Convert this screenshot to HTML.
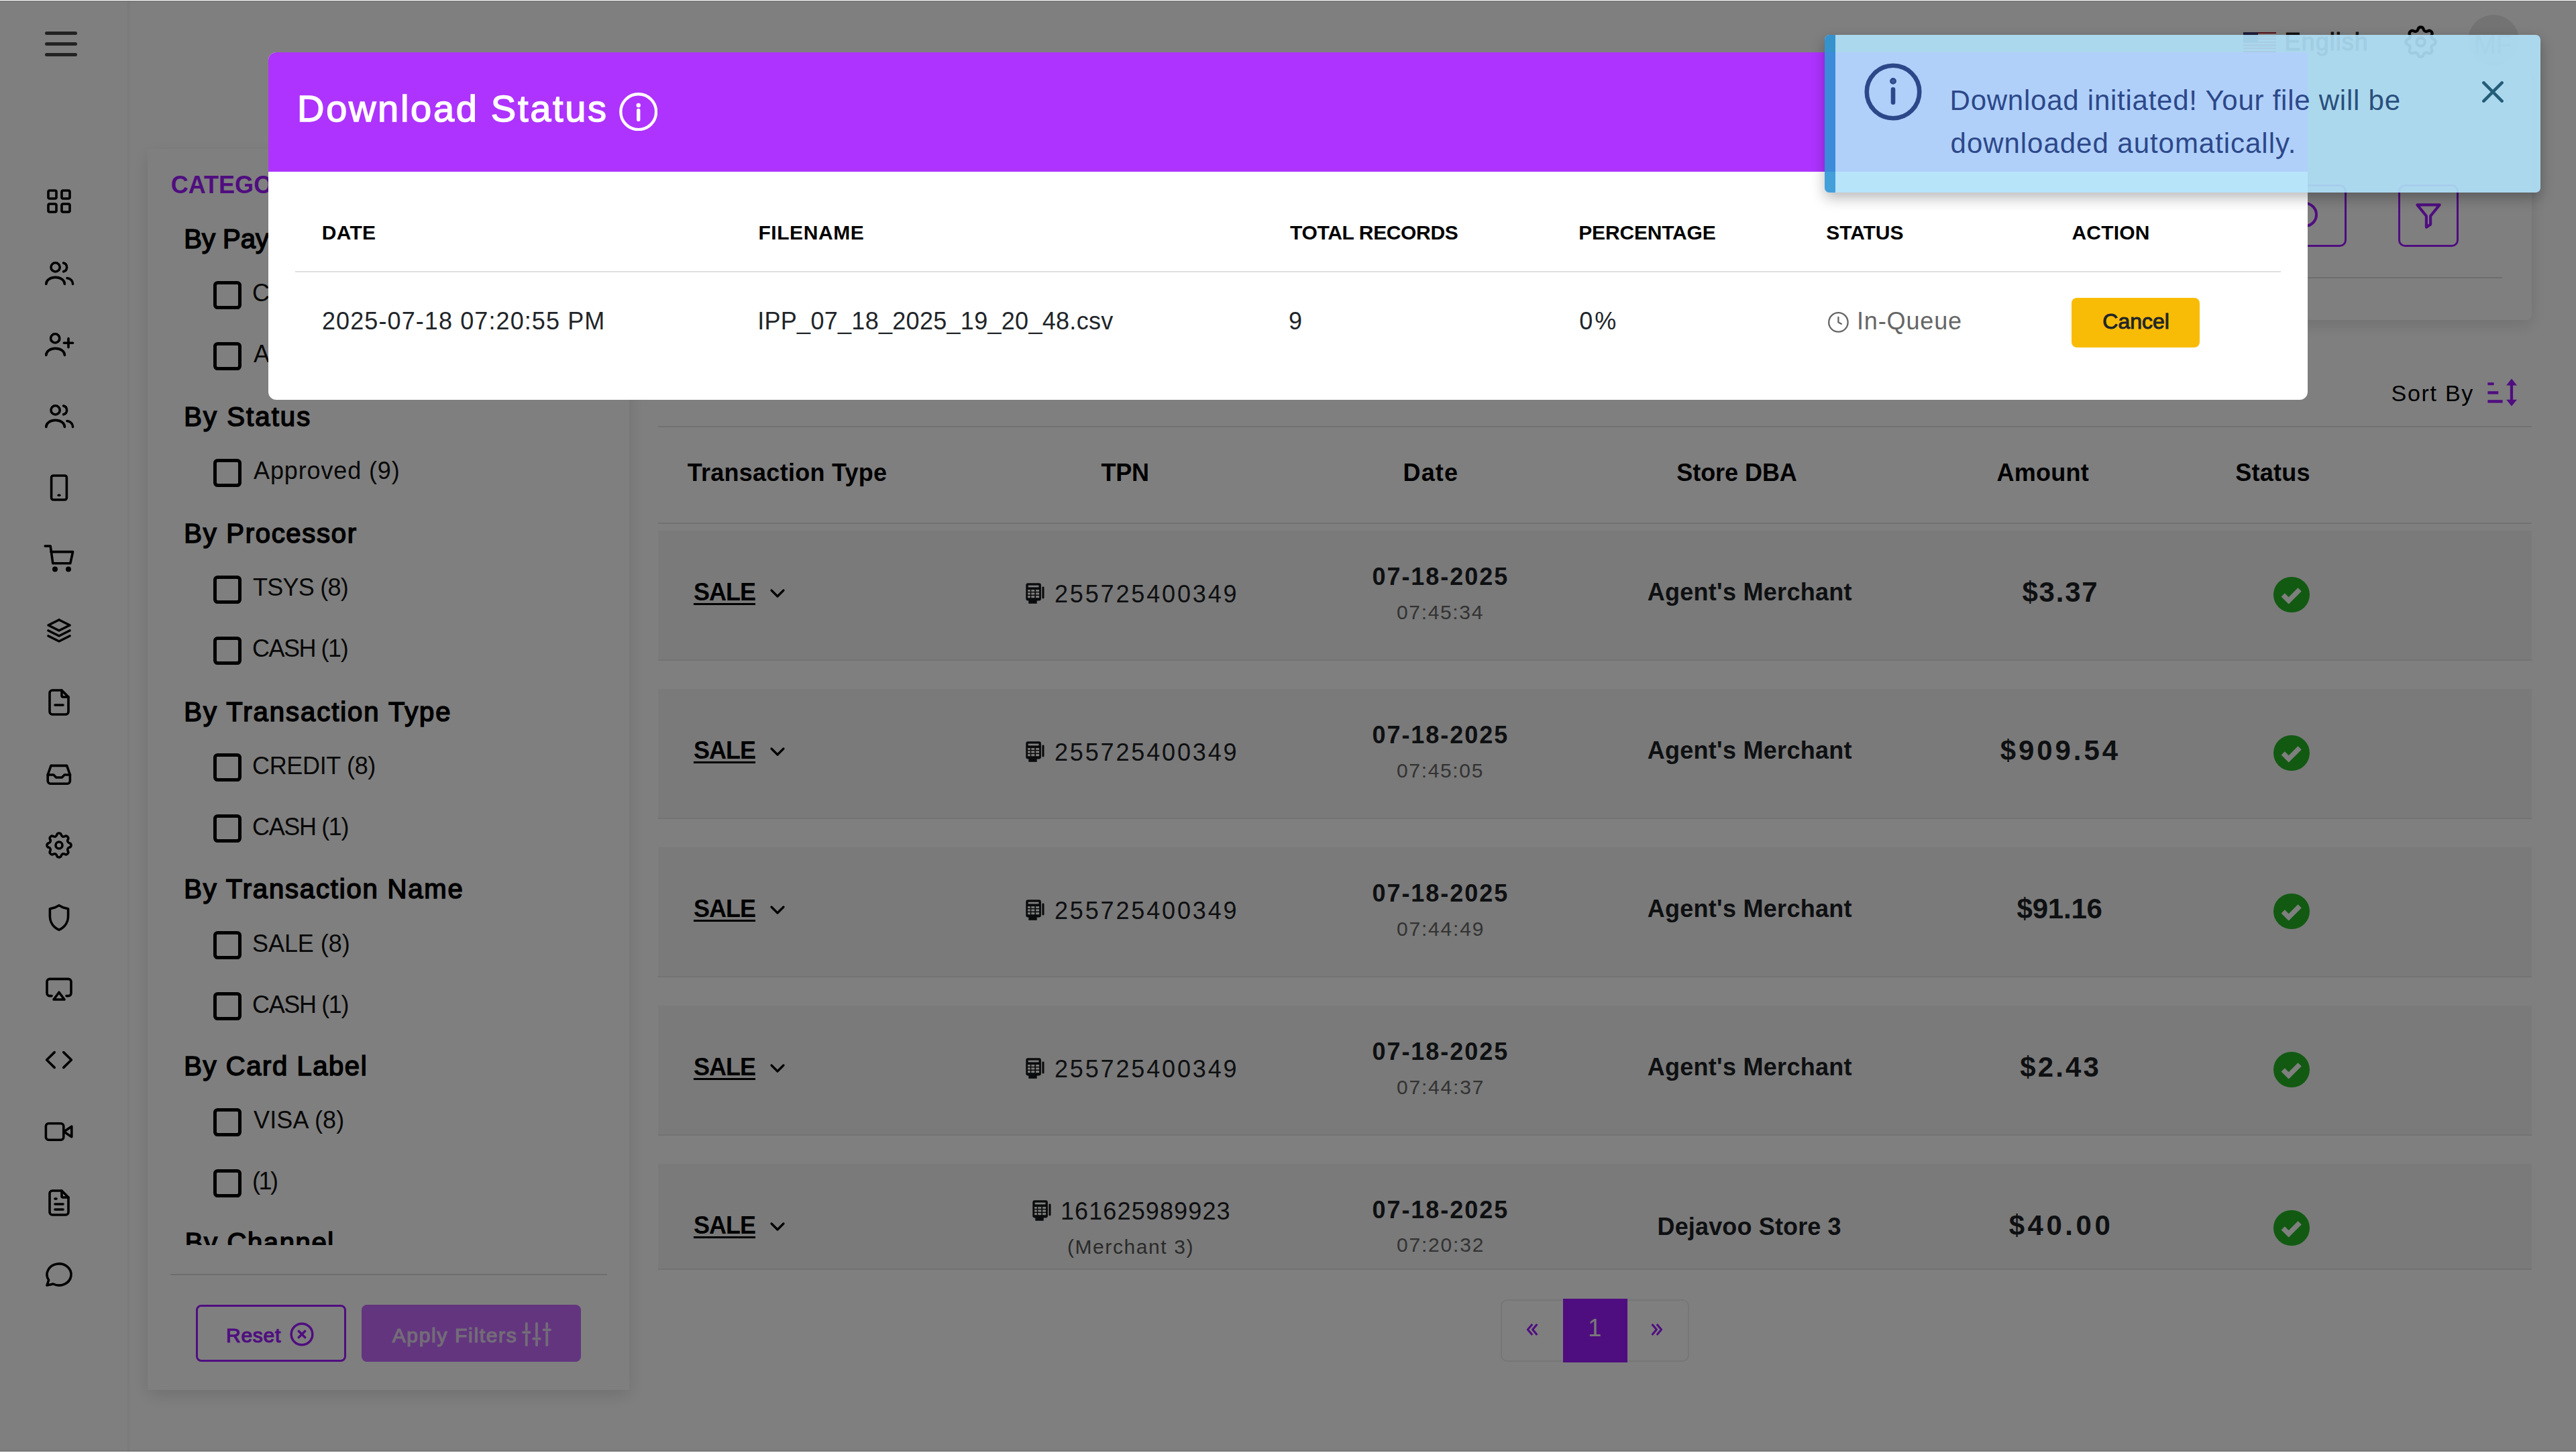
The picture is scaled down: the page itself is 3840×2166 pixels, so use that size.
<!DOCTYPE html>
<html>
<head>
<meta charset="utf-8">
<title>Download Status</title>
<style>
html{zoom:2;}
html,body{margin:0;padding:0;}
body{width:1920px;height:1083px;overflow:hidden;position:relative;background:#fff;font-family:"Liberation Sans",sans-serif;color:#212529;}
.abs{position:absolute;}
.t{position:absolute;white-space:nowrap;line-height:1;}
.cb{position:absolute;width:16px;height:16px;border:2.6px solid #000;border-radius:3.2px;box-sizing:content-box;}
</style>
</head>
<body>
<div class="abs" style="left:0;top:0;width:1920px;height:1083px;background:#fff;"><div class="abs" style="left:0;top:0;width:95px;height:1083px;background:#fff;box-shadow:1px 0 3px rgba(0,0,0,.06);"></div><div class="abs" style="left:33.5px;top:23.25px;width:24px;height:2.5px;border-radius:2px;background:#444;"></div><div class="abs" style="left:33.5px;top:31.25px;width:24px;height:2.5px;border-radius:2px;background:#444;"></div><div class="abs" style="left:33.5px;top:39.25px;width:24px;height:2.5px;border-radius:2px;background:#444;"></div><svg class="abs" style="left:32px;top:138px;width:24px;height:24px;" viewBox="0 0 24 24" fill="none" stroke="#000" stroke-width="1.8" stroke-linecap="round" stroke-linejoin="round"><rect x="4" y="4" width="6" height="6" rx="1"/><rect x="14" y="4" width="6" height="6" rx="1"/><rect x="4" y="14" width="6" height="6" rx="1"/><rect x="14" y="14" width="6" height="6" rx="1"/></svg><svg class="abs" style="left:32px;top:191.4px;width:24px;height:24px;" viewBox="0 0 24 24" fill="none" stroke="#000" stroke-width="1.8" stroke-linecap="round" stroke-linejoin="round"><circle cx="9.3" cy="7.7" r="3.3"/><path d="M2.4 20.2a6.9 5 0 0 1 13.8 0"/><path d="M15.3 4.5a3.3 3.3 0 0 1 0 6.4"/><path d="M18 15.8a4.5 4.5 0 0 1 4.3 4.4"/></svg><svg class="abs" style="left:32px;top:244.5px;width:24px;height:24px;" viewBox="0 0 24 24" fill="none" stroke="#000" stroke-width="1.8" stroke-linecap="round" stroke-linejoin="round"><circle cx="9.1" cy="7.7" r="3.3"/><path d="M2.4 20.2a6.9 5 0 0 1 13.8 0"/><path d="M15.7 11.1h6.6M19 7.8v6.6"/></svg><svg class="abs" style="left:32px;top:298px;width:24px;height:24px;" viewBox="0 0 24 24" fill="none" stroke="#000" stroke-width="1.8" stroke-linecap="round" stroke-linejoin="round"><circle cx="9.3" cy="7.7" r="3.3"/><path d="M2.4 20.2a6.9 5 0 0 1 13.8 0"/><path d="M15.3 4.5a3.3 3.3 0 0 1 0 6.4"/><path d="M18 15.8a4.5 4.5 0 0 1 4.3 4.4"/></svg><svg class="abs" style="left:32px;top:351.4px;width:24px;height:24px;" viewBox="0 0 24 24" fill="none" stroke="#000" stroke-width="1.8" stroke-linecap="round" stroke-linejoin="round"><rect x="6.3" y="3" width="11.4" height="18" rx="1.5"/><path d="M11.6 17.6h.8"/></svg><svg class="abs" style="left:32px;top:404px;width:24px;height:24px;" viewBox="0 0 24 24" fill="none" stroke="#000" stroke-width="1.8" stroke-linecap="round" stroke-linejoin="round"><circle cx="9" cy="20.3" r="1.1" fill="#000"/><circle cx="19" cy="20.3" r="1.1" fill="#000"/><path d="M1.6 3h4l1.8 12.9h13l1.9 -8.6h-16.4"/></svg><svg class="abs" style="left:32px;top:458px;width:24px;height:24px;" viewBox="0 0 24 24" fill="none" stroke="#000" stroke-width="1.8" stroke-linecap="round" stroke-linejoin="round"><path d="M12 4l-8 4l8 4l8 -4l-8 -4"/><path d="M4 12l8 4l8 -4"/><path d="M4 16l8 4l8 -4"/></svg><svg class="abs" style="left:32px;top:511.4px;width:24px;height:24px;" viewBox="0 0 24 24" fill="none" stroke="#000" stroke-width="1.8" stroke-linecap="round" stroke-linejoin="round"><path d="M14 3v4a1 1 0 0 0 1 1h4"/><path d="M17 21h-10a2 2 0 0 1 -2 -2v-14a2 2 0 0 1 2 -2h7l5 5v11a2 2 0 0 1 -2 2z"/><path d="M9 14l6 0"/></svg><svg class="abs" style="left:32px;top:564.3px;width:24px;height:24px;" viewBox="0 0 24 24" fill="none" stroke="#000" stroke-width="1.8" stroke-linecap="round" stroke-linejoin="round"><path d="M3.6 13l2.4 -6.8h11.8l2.4 6.8v4.6a2 2 0 0 1 -2 2h-12.6a2 2 0 0 1 -2 -2z"/><path d="M3.6 13h4.3l2 2h4.2l2 -2h4.2"/></svg><svg class="abs" style="left:32px;top:618px;width:24px;height:24px;" viewBox="0 0 24 24" fill="none" stroke="#000" stroke-width="1.8" stroke-linecap="round" stroke-linejoin="round"><path d="M10.325 4.317c.426 -1.756 2.924 -1.756 3.35 0a1.724 1.724 0 0 0 2.573 1.066c1.543 -.94 3.31 .826 2.37 2.37a1.724 1.724 0 0 0 1.065 2.572c1.756 .426 1.756 2.924 0 3.35a1.724 1.724 0 0 0 -1.066 2.573c.94 1.543 -.826 3.31 -2.37 2.37a1.724 1.724 0 0 0 -2.572 1.065c-.426 1.756 -2.924 1.756 -3.35 0a1.724 1.724 0 0 0 -2.573 -1.066c-1.543 .94 -3.31 -.826 -2.37 -2.37a1.724 1.724 0 0 0 -1.065 -2.572c-1.756 -.426 -1.756 -2.924 0 -3.35a1.724 1.724 0 0 0 1.066 -2.573c-.94 -1.543 .826 -3.31 2.37 -2.37c1 .608 2.296 .07 2.572 -1.065z"/><circle cx="12" cy="12" r="2.5"/></svg><svg class="abs" style="left:32px;top:671.5px;width:24px;height:24px;" viewBox="0 0 24 24" fill="none" stroke="#000" stroke-width="1.8" stroke-linecap="round" stroke-linejoin="round"><path d="M12 3.3c-2 1.4 -4.4 2.2 -6.8 2.6v5.4c0 5 3 8.6 6.8 10.3c3.8 -1.7 6.8 -5.3 6.8 -10.3v-5.4c-2.4 -.4 -4.8 -1.2 -6.8 -2.6z"/></svg><svg class="abs" style="left:32px;top:724.8px;width:24px;height:24px;" viewBox="0 0 24 24" fill="none" stroke="#000" stroke-width="1.8" stroke-linecap="round" stroke-linejoin="round"><path d="M6.5 17.3h-1.5a2 2 0 0 1 -2 -2v-8.6a2 2 0 0 1 2 -2h14a2 2 0 0 1 2 2v8.6a2 2 0 0 1 -2 2h-1.5"/><path d="M12 14.6l4 5.4h-8z"/></svg><svg class="abs" style="left:32px;top:778px;width:24px;height:24px;" viewBox="0 0 24 24" fill="none" stroke="#000" stroke-width="1.8" stroke-linecap="round" stroke-linejoin="round"><path d="M8.6 6.3l-5.8 5.7l5.8 5.7"/><path d="M15.4 6.3l5.8 5.7l-5.8 5.7"/></svg><svg class="abs" style="left:32px;top:831.4px;width:24px;height:24px;" viewBox="0 0 24 24" fill="none" stroke="#000" stroke-width="1.8" stroke-linecap="round" stroke-linejoin="round"><rect x="2.2" y="5.9" width="13.2" height="12.2" rx="2"/><path d="M15.6 12l5.8 -3.9v7.8z"/></svg><svg class="abs" style="left:32px;top:884.7px;width:24px;height:24px;" viewBox="0 0 24 24" fill="none" stroke="#000" stroke-width="1.8" stroke-linecap="round" stroke-linejoin="round"><path d="M14 3v4a1 1 0 0 0 1 1h4"/><path d="M17 21h-10a2 2 0 0 1 -2 -2v-14a2 2 0 0 1 2 -2h7l5 5v11a2 2 0 0 1 -2 2z"/><path d="M9 9l1 0"/><path d="M9 13l6 0"/><path d="M9 17l6 0"/></svg><svg class="abs" style="left:32px;top:938px;width:24px;height:24px;" viewBox="0 0 24 24" fill="none" stroke="#000" stroke-width="1.8" stroke-linecap="round" stroke-linejoin="round"><path d="M3 20l1.3 -3.9a9 8 0 1 1 3.4 2.9l-4.7 1"/></svg><div class="abs" style="left:1672px;top:24px;width:24.5px;height:15px;background:repeating-linear-gradient(#b22234 0 1.15px,#fff 1.15px 2.3px);"><div class="abs" style="left:0;top:0;width:11px;height:8px;background:#3c3b6e;"></div></div><div class="t" style="left:1702.80px;top:22.26px;font-size:18px;font-weight:400;color:#222;letter-spacing:0.500px;-webkit-text-stroke:0.6px #222;">English</div><svg class="abs" style="left:1789.6px;top:16.7px;width:29.6px;height:29.6px;" viewBox="0 0 24 24" fill="none" stroke="#000" stroke-width="1.7" stroke-linecap="round" stroke-linejoin="round"><path d="M10.325 4.317c.426 -1.756 2.924 -1.756 3.35 0a1.724 1.724 0 0 0 2.573 1.066c1.543 -.94 3.31 .826 2.37 2.37a1.724 1.724 0 0 0 1.065 2.572c1.756 .426 1.756 2.924 0 3.35a1.724 1.724 0 0 0 -1.066 2.573c.94 1.543 -.826 3.31 -2.37 2.37a1.724 1.724 0 0 0 -2.572 1.065c-.426 1.756 -2.924 1.756 -3.35 0a1.724 1.724 0 0 0 -2.573 -1.066c-1.543 .94 -3.31 -.826 -2.37 -2.37a1.724 1.724 0 0 0 -1.065 -2.572c-1.756 -.426 -1.756 -2.924 0 -3.35a1.724 1.724 0 0 0 1.066 -2.573c-.94 -1.543 .826 -3.31 2.37 -2.37c1 .608 2.296 .07 2.572 -1.065z"/><circle cx="12" cy="12" r="2.5"/></svg><div class="abs" style="left:1839.5px;top:11px;width:38px;height:38px;border-radius:50%;background:#e6e6e6;"></div><div class="t" style="left:1844.00px;top:23.07px;font-size:20px;font-weight:400;color:#999;letter-spacing:-0.500px;">MF</div><div class="abs" style="left:110px;top:111px;width:359px;height:925px;background:#fff;border-radius:0;box-shadow:0 4px 12px rgba(0,0,0,.12);"></div><div class="t" style="left:127.40px;top:129.16px;font-size:18px;font-weight:700;color:#9e1cff;">CATEGORIES</div><div class="t" style="left:137.15px;top:168.07px;font-size:20px;font-weight:400;color:#000;-webkit-text-stroke:0.8px #000;">By Payment Type</div><div class="cb" style="left:158.8px;top:209.35px;"></div><div class="t" style="left:188.00px;top:209.71px;font-size:18px;font-weight:400;color:#111;">CARD (8)</div><div class="cb" style="left:158.8px;top:254.85px;"></div><div class="t" style="left:189.00px;top:255.21px;font-size:18px;font-weight:400;color:#111;">ACH (1)</div><div class="t" style="left:137.15px;top:300.52px;font-size:20px;font-weight:400;color:#000;letter-spacing:1.044px;-webkit-text-stroke:0.8px #000;">By Status</div><div class="cb" style="left:158.8px;top:341.80px;"></div><div class="t" style="left:189.00px;top:342.16px;font-size:18px;font-weight:400;color:#111;letter-spacing:0.436px;">Approved (9)</div><div class="t" style="left:137.15px;top:387.57px;font-size:20px;font-weight:400;color:#000;letter-spacing:0.859px;-webkit-text-stroke:0.8px #000;">By Processor</div><div class="cb" style="left:158.8px;top:428.85px;"></div><div class="t" style="left:188.50px;top:429.21px;font-size:18px;font-weight:400;color:#111;letter-spacing:-0.386px;">TSYS (8)</div><div class="cb" style="left:158.8px;top:474.35px;"></div><div class="t" style="left:188.00px;top:474.71px;font-size:18px;font-weight:400;color:#111;letter-spacing:-0.743px;">CASH (1)</div><div class="t" style="left:137.15px;top:520.42px;font-size:20px;font-weight:400;color:#000;letter-spacing:0.989px;-webkit-text-stroke:0.8px #000;">By Transaction Type</div><div class="cb" style="left:158.8px;top:561.70px;"></div><div class="t" style="left:188.00px;top:562.06px;font-size:18px;font-weight:400;color:#111;letter-spacing:-0.167px;">CREDIT (8)</div><div class="cb" style="left:158.8px;top:607.20px;"></div><div class="t" style="left:188.00px;top:607.56px;font-size:18px;font-weight:400;color:#111;letter-spacing:-0.686px;">CASH (1)</div><div class="t" style="left:137.15px;top:652.67px;font-size:20px;font-weight:400;color:#000;letter-spacing:0.917px;-webkit-text-stroke:0.8px #000;">By Transaction Name</div><div class="cb" style="left:158.8px;top:693.95px;"></div><div class="t" style="left:188.00px;top:694.31px;font-size:18px;font-weight:400;color:#111;letter-spacing:-0.029px;">SALE (8)</div><div class="cb" style="left:158.8px;top:739.45px;"></div><div class="t" style="left:188.00px;top:739.81px;font-size:18px;font-weight:400;color:#111;letter-spacing:-0.686px;">CASH (1)</div><div class="t" style="left:137.15px;top:784.47px;font-size:20px;font-weight:400;color:#000;letter-spacing:0.783px;-webkit-text-stroke:0.8px #000;">By Card Label</div><div class="cb" style="left:158.8px;top:825.75px;"></div><div class="t" style="left:189.00px;top:826.11px;font-size:18px;font-weight:400;color:#111;letter-spacing:0.086px;">VISA (8)</div><div class="cb" style="left:158.8px;top:871.25px;"></div><div class="t" style="left:188.00px;top:871.61px;font-size:18px;font-weight:400;color:#111;letter-spacing:-1.250px;">(1)</div><div class="abs" style="left:120px;top:900px;width:340px;height:27.95px;overflow:hidden;"><div class="t" style="left:17.85px;top:15.82px;font-size:20px;font-weight:400;color:#000;letter-spacing:0.817px;-webkit-text-stroke:0.8px #000;">By Channel</div></div><div class="abs" style="left:127px;top:949.5px;width:325.5px;height:1px;background:#dcdcdc;"></div><div class="abs" style="left:146px;top:972.4px;width:112px;height:42.8px;box-sizing:border-box;border:1.5px solid #9e1cff;border-radius:4px;"></div><div class="t" style="left:168.50px;top:987.80px;font-size:15px;font-weight:400;color:#9e1cff;letter-spacing:0.375px;-webkit-text-stroke:0.6px #9e1cff;">Reset</div><svg class="abs" style="left:215.7px;top:984.8px;width:19px;height:19px;" viewBox="0 0 24 24" fill="none" stroke="#9e1cff" stroke-width="2.2" stroke-linecap="round" stroke-linejoin="round"><circle cx="12" cy="12" r="10"/><path d="M9 9l6 6m0 -6l-6 6"/></svg><div class="abs" style="left:269.5px;top:972.4px;width:163.6px;height:42.8px;background:#c66aff;border-radius:4px;"></div><div class="t" style="left:292.35px;top:987.80px;font-size:15px;font-weight:400;color:#e6d8f0;letter-spacing:0.833px;-webkit-text-stroke:0.6px #e6d8f0;">Apply Filters</div><svg class="abs" style="left:388.5px;top:984.5px;width:23px;height:20px;" viewBox="0 0 24 21" fill="none" stroke="#e6d8f0" stroke-width="2" stroke-linecap="round" stroke-linejoin="round"><path d="M4 2v5m0 4v8M12 2v10m0 4v3M20 2v3m0 4v10M1.5 9h5M9.5 14h5M17.5 7h5"/></svg><div class="abs" style="left:480px;top:50px;width:1407px;height:188.5px;background:#fff;border-radius:4px;box-shadow:0 4px 12px rgba(0,0,0,.12);"></div><div class="abs" style="left:500px;top:206.5px;width:1365px;height:1px;background:#dcdcdc;"></div><div class="abs" style="left:1704px;top:137.4px;width:45px;height:46.6px;box-sizing:border-box;border:1.5px solid #9e1cff;border-radius:5px;"></div><svg class="abs" style="left:1706px;top:148px;width:24px;height:24px;" viewBox="0 0 24 24" fill="none" stroke="#9e1cff" stroke-width="2" stroke-linecap="round" stroke-linejoin="round"><circle cx="12" cy="12" r="8.5"/></svg><div class="abs" style="left:1787.5px;top:137.4px;width:45px;height:46.6px;box-sizing:border-box;border:1.5px solid #9e1cff;border-radius:5px;"></div><svg class="abs" style="left:1797.5px;top:148.5px;width:25px;height:25px;" viewBox="0 0 24 24" fill="none" stroke="#9e1cff" stroke-width="2" stroke-linecap="round" stroke-linejoin="round"><path d="M4 4h16l-6.5 8v6l-3 2v-8z"/></svg><div class="t" style="left:1782.30px;top:284.61px;font-size:17px;font-weight:400;color:#000;letter-spacing:0.850px;">Sort By</div><svg class="abs" style="left:1853px;top:282px;width:24px;height:22px;" viewBox="0 0 24 22" fill="#9e1cff" stroke="none" stroke-width="2" stroke-linecap="round" stroke-linejoin="round"><rect x="1.2" y="3.1" width="4.6" height="2"/><rect x="1.2" y="9.6" width="7.95" height="2.2"/><rect x="1.2" y="16.1" width="11.1" height="2.2"/><rect x="17.9" y="4" width="2.15" height="13"/><polygon points="15.05,5.3 23,5.3 19,0.3"/><polygon points="15.05,15.9 23,15.9 19,20.7"/></svg><div class="abs" style="left:490.6px;top:317.5px;width:1396.4px;height:1px;background:#e2e2e2;"></div><div class="abs" style="left:490.6px;top:389.5px;width:1396.4px;height:1px;background:#e2e2e2;"></div><div class="t" style="left:512.35px;top:343.61px;font-size:18px;font-weight:700;color:#000;letter-spacing:0.133px;">Transaction Type</div><div class="t" style="left:820.70px;top:343.61px;font-size:18px;font-weight:700;color:#000;letter-spacing:-0.100px;">TPN</div><div class="t" style="left:1045.80px;top:343.61px;font-size:18px;font-weight:700;color:#000;letter-spacing:0.550px;">Date</div><div class="t" style="left:1249.65px;top:343.61px;font-size:18px;font-weight:700;color:#000;letter-spacing:-0.031px;">Store DBA</div><div class="t" style="left:1488.30px;top:343.61px;font-size:18px;font-weight:700;color:#000;letter-spacing:0.120px;">Amount</div><div class="t" style="left:1666.15px;top:343.61px;font-size:18px;font-weight:700;color:#000;letter-spacing:0.130px;">Status</div><div class="abs" style="left:490.6px;top:395.6px;width:1396.4px;height:97.1px;background:#f4f4f4;border-bottom:1px solid #e6e6e6;box-sizing:border-box;"></div><div class="t" style="left:516.95px;top:432.66px;font-size:18px;font-weight:700;color:#000;letter-spacing:-0.483px;text-decoration:underline;text-underline-offset:2px;text-decoration-thickness:1.5px;">SALE</div><svg class="abs" style="left:573.5px;top:438.4px;width:12px;height:8px;" viewBox="0 0 12 8" fill="none" stroke="#000" stroke-width="1.6" stroke-linecap="round" stroke-linejoin="round"><path d="M1.5 1.5l4.5 4.5l4.5 -4.5"/></svg><svg class="abs" style="left:764px;top:432.9px;width:15px;height:17px;" viewBox="0 0 15 17" fill="none" stroke="none" stroke-width="2" stroke-linecap="round" stroke-linejoin="round"><rect x="0.65" y="1.6" width="11.3" height="13.15" rx="1.6" fill="#151719" stroke="none"/><g fill="#fff" stroke="none"><rect x="2.35" y="3.3" width="7.9" height="1.4"/><rect x="2.05" y="6.55" width="1.85" height="1.4"/><rect x="4.65" y="6.55" width="2.5" height="1.4"/><rect x="8.05" y="6.55" width="2.5" height="1.4"/><rect x="2.05" y="8.7" width="1.85" height="1.55"/><rect x="4.65" y="8.7" width="2.5" height="1.55"/><rect x="8.05" y="8.7" width="2.5" height="1.55"/><rect x="2.05" y="11.05" width="1.85" height="1.55"/><rect x="4.65" y="11.05" width="2.5" height="1.55"/><rect x="8.05" y="11.05" width="2.5" height="1.55"/></g><rect x="2.65" y="14" width="6.2" height="2.9" fill="#151719" stroke="none"/><rect x="12.7" y="4.2" width="1.55" height="9" rx=".7" fill="#151719" stroke="none"/></svg><div class="t" style="left:786.00px;top:434.06px;font-size:18px;font-weight:400;color:#1d2024;letter-spacing:1.423px;">255725400349</div><div class="t" style="left:1022.70px;top:420.91px;font-size:18px;font-weight:700;color:#1d2024;letter-spacing:0.989px;">07-18-2025</div><div class="t" style="left:1041.00px;top:448.85px;font-size:15px;font-weight:400;color:#666;letter-spacing:0.829px;">07:45:34</div><div class="t" style="left:1227.83px;top:432.66px;font-size:18px;font-weight:700;color:#1d2024;letter-spacing:0.143px;">Agent's Merchant</div><div class="t" style="left:1507.25px;top:431.02px;font-size:21px;font-weight:700;color:#1d2024;letter-spacing:0.875px;">$3.37</div><div class="abs" style="left:1694.65px;top:430.04999999999995px;width:26.7px;height:26.7px;border-radius:50%;background:#24b424;"></div><svg class="abs" style="left:1694.65px;top:430.04999999999995px;width:26.7px;height:26.7px;stroke-linecap:butt;stroke-linejoin:miter;" viewBox="0 0 24 24" fill="none" stroke="#fff" stroke-width="3.3" stroke-linecap="round" stroke-linejoin="round"><path d="M6.4 12.1l3.8 3.8l7.4 -7.4"/></svg><div class="abs" style="left:490.6px;top:513.6px;width:1396.4px;height:97.1px;background:#f4f4f4;border-bottom:1px solid #e6e6e6;box-sizing:border-box;"></div><div class="t" style="left:516.95px;top:550.61px;font-size:18px;font-weight:700;color:#000;letter-spacing:-0.483px;text-decoration:underline;text-underline-offset:2px;text-decoration-thickness:1.5px;">SALE</div><svg class="abs" style="left:573.5px;top:556.35px;width:12px;height:8px;" viewBox="0 0 12 8" fill="none" stroke="#000" stroke-width="1.6" stroke-linecap="round" stroke-linejoin="round"><path d="M1.5 1.5l4.5 4.5l4.5 -4.5"/></svg><svg class="abs" style="left:764px;top:550.85px;width:15px;height:17px;" viewBox="0 0 15 17" fill="none" stroke="none" stroke-width="2" stroke-linecap="round" stroke-linejoin="round"><rect x="0.65" y="1.6" width="11.3" height="13.15" rx="1.6" fill="#151719" stroke="none"/><g fill="#fff" stroke="none"><rect x="2.35" y="3.3" width="7.9" height="1.4"/><rect x="2.05" y="6.55" width="1.85" height="1.4"/><rect x="4.65" y="6.55" width="2.5" height="1.4"/><rect x="8.05" y="6.55" width="2.5" height="1.4"/><rect x="2.05" y="8.7" width="1.85" height="1.55"/><rect x="4.65" y="8.7" width="2.5" height="1.55"/><rect x="8.05" y="8.7" width="2.5" height="1.55"/><rect x="2.05" y="11.05" width="1.85" height="1.55"/><rect x="4.65" y="11.05" width="2.5" height="1.55"/><rect x="8.05" y="11.05" width="2.5" height="1.55"/></g><rect x="2.65" y="14" width="6.2" height="2.9" fill="#151719" stroke="none"/><rect x="12.7" y="4.2" width="1.55" height="9" rx=".7" fill="#151719" stroke="none"/></svg><div class="t" style="left:786.00px;top:552.01px;font-size:18px;font-weight:400;color:#1d2024;letter-spacing:1.423px;">255725400349</div><div class="t" style="left:1022.70px;top:538.86px;font-size:18px;font-weight:700;color:#1d2024;letter-spacing:0.989px;">07-18-2025</div><div class="t" style="left:1041.00px;top:566.80px;font-size:15px;font-weight:400;color:#666;letter-spacing:0.829px;">07:45:05</div><div class="t" style="left:1227.83px;top:550.61px;font-size:18px;font-weight:700;color:#1d2024;letter-spacing:0.143px;">Agent's Merchant</div><div class="t" style="left:1490.85px;top:548.97px;font-size:21px;font-weight:700;color:#1d2024;letter-spacing:1.967px;">$909.54</div><div class="abs" style="left:1694.65px;top:548.0px;width:26.7px;height:26.7px;border-radius:50%;background:#24b424;"></div><svg class="abs" style="left:1694.65px;top:548.0px;width:26.7px;height:26.7px;stroke-linecap:butt;stroke-linejoin:miter;" viewBox="0 0 24 24" fill="none" stroke="#fff" stroke-width="3.3" stroke-linecap="round" stroke-linejoin="round"><path d="M6.4 12.1l3.8 3.8l7.4 -7.4"/></svg><div class="abs" style="left:490.6px;top:631.6px;width:1396.4px;height:97.1px;background:#f4f4f4;border-bottom:1px solid #e6e6e6;box-sizing:border-box;"></div><div class="t" style="left:516.95px;top:668.56px;font-size:18px;font-weight:700;color:#000;letter-spacing:-0.483px;text-decoration:underline;text-underline-offset:2px;text-decoration-thickness:1.5px;">SALE</div><svg class="abs" style="left:573.5px;top:674.3px;width:12px;height:8px;" viewBox="0 0 12 8" fill="none" stroke="#000" stroke-width="1.6" stroke-linecap="round" stroke-linejoin="round"><path d="M1.5 1.5l4.5 4.5l4.5 -4.5"/></svg><svg class="abs" style="left:764px;top:668.8px;width:15px;height:17px;" viewBox="0 0 15 17" fill="none" stroke="none" stroke-width="2" stroke-linecap="round" stroke-linejoin="round"><rect x="0.65" y="1.6" width="11.3" height="13.15" rx="1.6" fill="#151719" stroke="none"/><g fill="#fff" stroke="none"><rect x="2.35" y="3.3" width="7.9" height="1.4"/><rect x="2.05" y="6.55" width="1.85" height="1.4"/><rect x="4.65" y="6.55" width="2.5" height="1.4"/><rect x="8.05" y="6.55" width="2.5" height="1.4"/><rect x="2.05" y="8.7" width="1.85" height="1.55"/><rect x="4.65" y="8.7" width="2.5" height="1.55"/><rect x="8.05" y="8.7" width="2.5" height="1.55"/><rect x="2.05" y="11.05" width="1.85" height="1.55"/><rect x="4.65" y="11.05" width="2.5" height="1.55"/><rect x="8.05" y="11.05" width="2.5" height="1.55"/></g><rect x="2.65" y="14" width="6.2" height="2.9" fill="#151719" stroke="none"/><rect x="12.7" y="4.2" width="1.55" height="9" rx=".7" fill="#151719" stroke="none"/></svg><div class="t" style="left:786.00px;top:669.96px;font-size:18px;font-weight:400;color:#1d2024;letter-spacing:1.423px;">255725400349</div><div class="t" style="left:1022.70px;top:656.81px;font-size:18px;font-weight:700;color:#1d2024;letter-spacing:0.989px;">07-18-2025</div><div class="t" style="left:1041.00px;top:684.75px;font-size:15px;font-weight:400;color:#666;letter-spacing:0.900px;">07:44:49</div><div class="t" style="left:1227.83px;top:668.56px;font-size:18px;font-weight:700;color:#1d2024;letter-spacing:0.143px;">Agent's Merchant</div><div class="t" style="left:1503.30px;top:666.92px;font-size:21px;font-weight:700;color:#1d2024;letter-spacing:-0.120px;">$91.16</div><div class="abs" style="left:1694.65px;top:665.9499999999999px;width:26.7px;height:26.7px;border-radius:50%;background:#24b424;"></div><svg class="abs" style="left:1694.65px;top:665.9499999999999px;width:26.7px;height:26.7px;stroke-linecap:butt;stroke-linejoin:miter;" viewBox="0 0 24 24" fill="none" stroke="#fff" stroke-width="3.3" stroke-linecap="round" stroke-linejoin="round"><path d="M6.4 12.1l3.8 3.8l7.4 -7.4"/></svg><div class="abs" style="left:490.6px;top:749.6px;width:1396.4px;height:97.1px;background:#f4f4f4;border-bottom:1px solid #e6e6e6;box-sizing:border-box;"></div><div class="t" style="left:516.95px;top:786.56px;font-size:18px;font-weight:700;color:#000;letter-spacing:-0.483px;text-decoration:underline;text-underline-offset:2px;text-decoration-thickness:1.5px;">SALE</div><svg class="abs" style="left:573.5px;top:792.3px;width:12px;height:8px;" viewBox="0 0 12 8" fill="none" stroke="#000" stroke-width="1.6" stroke-linecap="round" stroke-linejoin="round"><path d="M1.5 1.5l4.5 4.5l4.5 -4.5"/></svg><svg class="abs" style="left:764px;top:786.8px;width:15px;height:17px;" viewBox="0 0 15 17" fill="none" stroke="none" stroke-width="2" stroke-linecap="round" stroke-linejoin="round"><rect x="0.65" y="1.6" width="11.3" height="13.15" rx="1.6" fill="#151719" stroke="none"/><g fill="#fff" stroke="none"><rect x="2.35" y="3.3" width="7.9" height="1.4"/><rect x="2.05" y="6.55" width="1.85" height="1.4"/><rect x="4.65" y="6.55" width="2.5" height="1.4"/><rect x="8.05" y="6.55" width="2.5" height="1.4"/><rect x="2.05" y="8.7" width="1.85" height="1.55"/><rect x="4.65" y="8.7" width="2.5" height="1.55"/><rect x="8.05" y="8.7" width="2.5" height="1.55"/><rect x="2.05" y="11.05" width="1.85" height="1.55"/><rect x="4.65" y="11.05" width="2.5" height="1.55"/><rect x="8.05" y="11.05" width="2.5" height="1.55"/></g><rect x="2.65" y="14" width="6.2" height="2.9" fill="#151719" stroke="none"/><rect x="12.7" y="4.2" width="1.55" height="9" rx=".7" fill="#151719" stroke="none"/></svg><div class="t" style="left:786.00px;top:787.96px;font-size:18px;font-weight:400;color:#1d2024;letter-spacing:1.423px;">255725400349</div><div class="t" style="left:1022.70px;top:774.81px;font-size:18px;font-weight:700;color:#1d2024;letter-spacing:0.989px;">07-18-2025</div><div class="t" style="left:1041.00px;top:802.75px;font-size:15px;font-weight:400;color:#666;letter-spacing:0.900px;">07:44:37</div><div class="t" style="left:1227.83px;top:786.56px;font-size:18px;font-weight:700;color:#1d2024;letter-spacing:0.143px;">Agent's Merchant</div><div class="t" style="left:1505.65px;top:784.92px;font-size:21px;font-weight:700;color:#1d2024;letter-spacing:1.550px;">$2.43</div><div class="abs" style="left:1694.65px;top:783.9499999999999px;width:26.7px;height:26.7px;border-radius:50%;background:#24b424;"></div><svg class="abs" style="left:1694.65px;top:783.9499999999999px;width:26.7px;height:26.7px;stroke-linecap:butt;stroke-linejoin:miter;" viewBox="0 0 24 24" fill="none" stroke="#fff" stroke-width="3.3" stroke-linecap="round" stroke-linejoin="round"><path d="M6.4 12.1l3.8 3.8l7.4 -7.4"/></svg><div class="abs" style="left:490.6px;top:867.6px;width:1396.4px;height:78.79999999999995px;background:#f4f4f4;border-bottom:1px solid #e6e6e6;box-sizing:border-box;"></div><div class="t" style="left:516.95px;top:904.51px;font-size:18px;font-weight:700;color:#000;letter-spacing:-0.483px;text-decoration:underline;text-underline-offset:2px;text-decoration-thickness:1.5px;">SALE</div><svg class="abs" style="left:573.5px;top:910.25px;width:12px;height:8px;" viewBox="0 0 12 8" fill="none" stroke="#000" stroke-width="1.6" stroke-linecap="round" stroke-linejoin="round"><path d="M1.5 1.5l4.5 4.5l4.5 -4.5"/></svg><svg class="abs" style="left:768.75px;top:893.15px;width:15px;height:17px;" viewBox="0 0 15 17" fill="none" stroke="none" stroke-width="2" stroke-linecap="round" stroke-linejoin="round"><rect x="0.65" y="1.6" width="11.3" height="13.15" rx="1.6" fill="#151719" stroke="none"/><g fill="#fff" stroke="none"><rect x="2.35" y="3.3" width="7.9" height="1.4"/><rect x="2.05" y="6.55" width="1.85" height="1.4"/><rect x="4.65" y="6.55" width="2.5" height="1.4"/><rect x="8.05" y="6.55" width="2.5" height="1.4"/><rect x="2.05" y="8.7" width="1.85" height="1.55"/><rect x="4.65" y="8.7" width="2.5" height="1.55"/><rect x="8.05" y="8.7" width="2.5" height="1.55"/><rect x="2.05" y="11.05" width="1.85" height="1.55"/><rect x="4.65" y="11.05" width="2.5" height="1.55"/><rect x="8.05" y="11.05" width="2.5" height="1.55"/></g><rect x="2.65" y="14" width="6.2" height="2.9" fill="#151719" stroke="none"/><rect x="12.7" y="4.2" width="1.55" height="9" rx=".7" fill="#151719" stroke="none"/></svg><div class="t" style="left:790.45px;top:894.11px;font-size:18px;font-weight:400;color:#1d2024;letter-spacing:0.564px;">161625989923</div><div class="t" style="left:795.45px;top:922.05px;font-size:15px;font-weight:400;color:#555;letter-spacing:0.795px;">(Merchant 3)</div><div class="t" style="left:1022.70px;top:892.76px;font-size:18px;font-weight:700;color:#1d2024;letter-spacing:0.989px;">07-18-2025</div><div class="t" style="left:1041.00px;top:920.70px;font-size:15px;font-weight:400;color:#666;letter-spacing:0.900px;">07:20:32</div><div class="t" style="left:1235.28px;top:905.46px;font-size:18px;font-weight:700;color:#1d2024;letter-spacing:0.071px;">Dejavoo Store 3</div><div class="t" style="left:1497.35px;top:902.87px;font-size:21px;font-weight:700;color:#1d2024;letter-spacing:2.260px;">$40.00</div><div class="abs" style="left:1694.65px;top:901.9px;width:26.7px;height:26.7px;border-radius:50%;background:#24b424;"></div><svg class="abs" style="left:1694.65px;top:901.9px;width:26.7px;height:26.7px;stroke-linecap:butt;stroke-linejoin:miter;" viewBox="0 0 24 24" fill="none" stroke="#fff" stroke-width="3.3" stroke-linecap="round" stroke-linejoin="round"><path d="M6.4 12.1l3.8 3.8l7.4 -7.4"/></svg><div class="abs" style="left:1118.4px;top:968.4px;width:140.4px;height:46.4px;box-sizing:border-box;border:1px solid #ececec;border-radius:5px;"></div><div class="abs" style="left:1164.8px;top:967.9px;width:48px;height:47.5px;background:#9e1cff;"></div><div class="t" style="left:1183.65px;top:980.76px;font-size:18px;font-weight:400;color:#f2f2f2;">1</div><svg class="abs" style="left:1137.4px;top:986.2px;width:9px;height:10px;stroke-linecap:butt;" viewBox="0 0 9 10" fill="none" stroke="#9e1cff" stroke-width="1.5" stroke-linecap="round" stroke-linejoin="round"><path d="M4.6 1l-3.4 4l3.4 4M8.2 1l-3.4 4l3.4 4"/></svg><svg class="abs" style="left:1230.6px;top:986.2px;width:9px;height:10px;stroke-linecap:butt;" viewBox="0 0 9 10" fill="none" stroke="#9e1cff" stroke-width="1.5" stroke-linecap="round" stroke-linejoin="round"><path d="M0.8 1l3.4 4l-3.4 4M4.4 1l3.4 4l-3.4 4"/></svg></div><div class="abs" style="left:0;top:0.5px;width:1920px;height:1081.5px;background:rgba(0,0,0,.5);"></div><div class="abs" style="left:0;top:0.5px;width:1920px;height:1px;background:rgba(0,0,0,.05);"></div><div class="abs" style="left:0;top:1081px;width:1920px;height:1px;background:rgba(0,0,0,.05);"></div><div class="abs" style="left:200px;top:39px;width:1520px;height:259px;background:#fff;border-radius:6px 0 6px 6px;overflow:hidden;"><div class="abs" style="left:0;top:0;width:1520px;height:89px;background:#ae33ff;"></div><div class="t" style="left:21.50px;top:27.80px;font-size:28px;font-weight:400;color:#fff;letter-spacing:1.346px;-webkit-text-stroke:0.75px #fff;">Download Status</div><svg class="abs" style="left:261.35px;top:30.05px;width:28.7px;height:28.7px;" viewBox="0 0 28.7 28.7" fill="none" stroke="#fff" stroke-width="2.2" stroke-linecap="round" stroke-linejoin="round"><circle cx="14.35" cy="14.35" r="13.2"/><path d="M14.35 13.2v6.9" stroke-width="2.7"/><circle cx="14.35" cy="9.5" r="1.6" fill="#fff" stroke="none"/></svg><div class="t" style="left:39.85px;top:126.80px;font-size:15px;font-weight:700;color:#000;letter-spacing:0.167px;">DATE</div><div class="t" style="left:365.20px;top:126.80px;font-size:15px;font-weight:700;color:#000;letter-spacing:0.286px;">FILENAME</div><div class="t" style="left:761.50px;top:126.80px;font-size:15px;font-weight:700;color:#000;letter-spacing:-0.179px;">TOTAL RECORDS</div><div class="t" style="left:976.65px;top:126.80px;font-size:15px;font-weight:700;color:#000;letter-spacing:-0.094px;">PERCENTAGE</div><div class="t" style="left:1161.10px;top:126.80px;font-size:15px;font-weight:700;color:#000;letter-spacing:-0.030px;">STATUS</div><div class="t" style="left:1344.25px;top:126.80px;font-size:15px;font-weight:700;color:#000;letter-spacing:0.100px;">ACTION</div><div class="abs" style="left:20px;top:163px;width:1480px;height:1px;background:#e0e0e0;"></div><div class="t" style="left:40.00px;top:191.26px;font-size:18px;font-weight:400;color:#212529;letter-spacing:0.548px;">2025-07-18 07:20:55 PM</div><div class="t" style="left:364.60px;top:191.26px;font-size:18px;font-weight:400;color:#212529;letter-spacing:0.146px;">IPP_07_18_2025_19_20_48.csv</div><div class="t" style="left:760.50px;top:191.26px;font-size:18px;font-weight:400;color:#212529;">9</div><div class="t" style="left:977.15px;top:191.26px;font-size:18px;font-weight:400;color:#212529;letter-spacing:1.500px;">0%</div><svg class="abs" style="left:1162.2px;top:193.1px;width:16.4px;height:16.4px;" viewBox="0 0 24 24" fill="none" stroke="#666" stroke-width="1.7" stroke-linecap="round" stroke-linejoin="round"><circle cx="12" cy="12" r="10.4"/><path d="M12 6.5v5.5l3.2 1.8"/></svg><div class="t" style="left:1184.00px;top:191.26px;font-size:18px;font-weight:400;color:#666;letter-spacing:0.429px;">In-Queue</div><div class="abs" style="left:1344px;top:182.8px;width:95.4px;height:37.3px;background:#f9bc06;border-radius:4px;"></div><div class="t" style="left:1367.15px;top:192.46px;font-size:16px;font-weight:400;color:#212529;-webkit-text-stroke:0.5px #212529;">Cancel</div></div><div class="abs" style="left:1360px;top:26px;width:533.5px;height:117.5px;border-radius:3.5px;overflow:hidden;opacity:.9;background:#b1e2fa;box-shadow:0 4px 10px rgba(0,0,0,.3);"><div class="abs" style="left:0;top:0;width:8px;height:117.5px;background:#2f95d6;"></div><svg class="abs" style="left:29.3px;top:21px;width:43px;height:43px;" viewBox="0 0 24 24" fill="none" stroke="#1f4b7d" stroke-width="1.85" stroke-linecap="round" stroke-linejoin="round"><circle cx="12" cy="12" r="10.95"/><path d="M12 11v5.4"/><circle cx="12" cy="7.5" r=".45" fill="#1f4b7d"/></svg><div class="t" style="left:93.30px;top:38.72px;font-size:21px;font-weight:400;color:#1f4b7d;letter-spacing:0.375px;">Download initiated! Your file will be</div><div class="t" style="left:93.80px;top:70.52px;font-size:21px;font-weight:400;color:#1f4b7d;letter-spacing:0.479px;">downloaded automatically.</div><svg class="abs" style="left:490px;top:34.6px;width:16px;height:16px;" viewBox="0 0 16 16" fill="none" stroke="#1a5a78" stroke-width="2.3" stroke-linecap="round" stroke-linejoin="round"><path d="M1.2 1.2l13.6 13.6M14.8 1.2l-13.6 13.6"/></svg></div>
<script>
(function(){var z=window.innerWidth/1920; if(z>0) document.documentElement.style.zoom=z;})();
</script>
</body>
</html>
